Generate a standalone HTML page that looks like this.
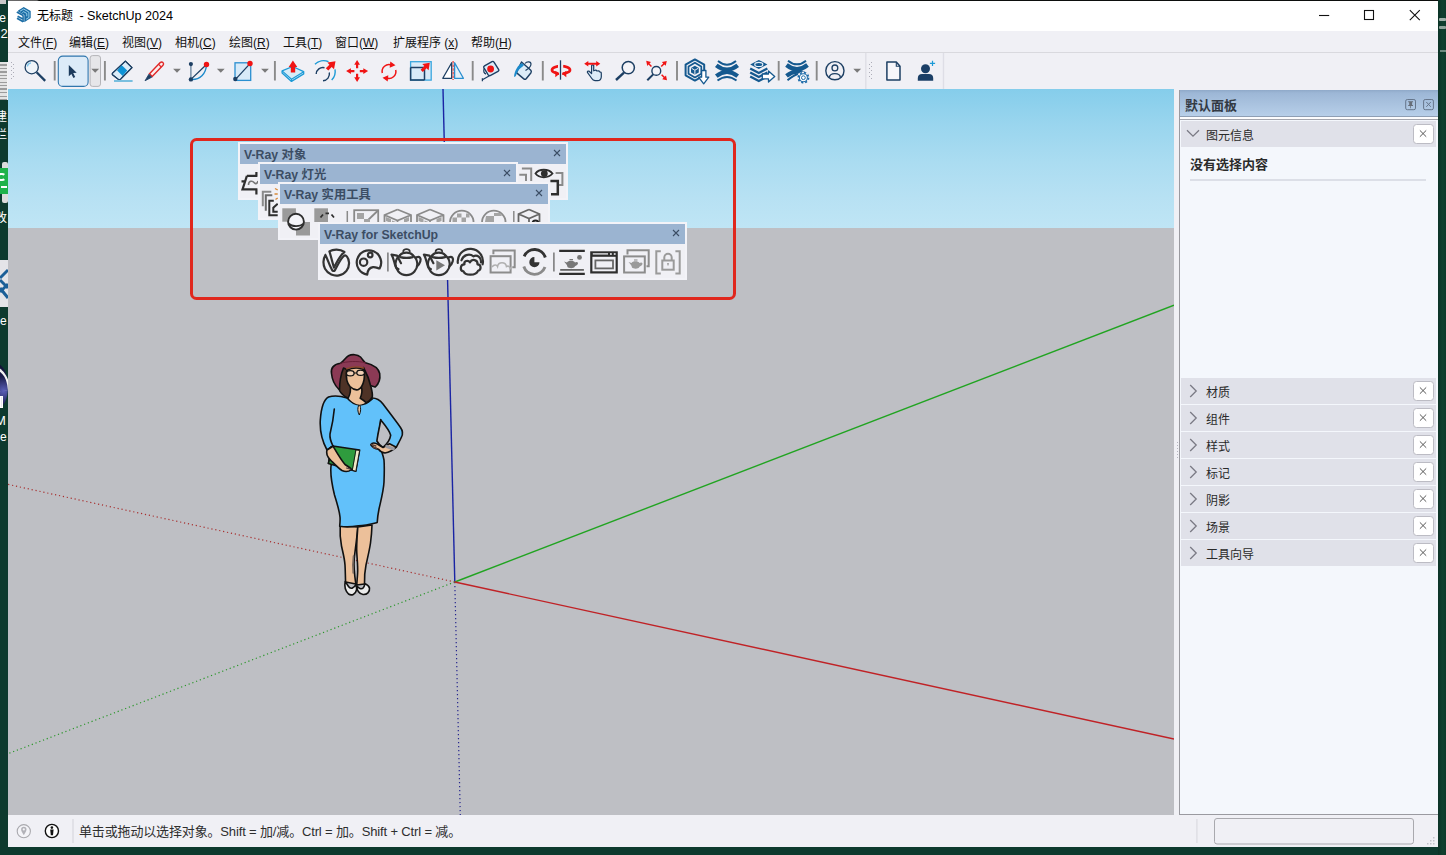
<!DOCTYPE html>
<html lang="zh-CN">
<head>
<meta charset="utf-8">
<title>无标题 - SketchUp 2024</title>
<style>
*{box-sizing:border-box;margin:0;padding:0}
html,body{width:1446px;height:855px;overflow:hidden;background:#0d3a2e}
body{position:relative;font-family:"Liberation Sans","Noto Sans CJK SC",sans-serif;font-size:12px;color:#1a1a1a}
.abs{position:absolute}
#desk{left:0;top:0;width:1446px;height:855px;background:#0d3a2e}
#win{left:8px;top:1px;width:1430px;height:846px;background:#f0f0f5}
#title{left:0;top:0;width:1430px;height:30px;background:#fff}
#title .txt{left:29px;top:0;height:30px;line-height:30px;font-size:12.6px;color:#000;white-space:nowrap}
#menu{left:0;top:30px;width:1430px;height:21px;background:#f0f0f5}
#menu span.mi{position:absolute;top:1px;height:21px;line-height:22px;font-size:12px;white-space:nowrap;color:#111}
#menu u{text-decoration:underline;text-underline-offset:1px}
#mline{left:0;top:51px;width:1430px;height:1px;background:#d9d9de}
#tb{left:0;top:52px;width:1430px;height:36px;background:#f0f0f5}
#view{left:0;top:88px;width:1166px;height:726px;background:#bebfc4;overflow:hidden}
#sky{left:0;top:0;width:1166px;height:139px;background:linear-gradient(#85cdeb 0,#99d5ee 25%,#aadcf1 52%,#b7e1f3 78%,#bfe5f5 100%)}
#status{left:0;top:814px;width:1430px;height:32px;background:#f0f0f5}
#status .txt{left:71px;top:0;height:33px;line-height:34px;font-size:13px;letter-spacing:-0.150px;color:#2e2e2e;white-space:nowrap}
/* right panel */
#panel{left:1171px;top:89px;width:259px;height:725px;background:#f4f7fc;border-left:1px solid #9a9aa0;border-bottom:1px solid #9a9aa0}
#phead{left:0;top:0;width:258px;height:27px;background:linear-gradient(#8fa9c9 0,#9db7d6 12%,#b7cfe9 100%);border-bottom:1px solid #8f9fb4}
#phead .txt{left:5px;top:4px;height:22px;line-height:23px;font-size:13px;font-weight:bold;color:#333a44;white-space:nowrap}
.prow{position:absolute;left:1px;width:255px;height:26px;background:#e0e1e9}
.prow .txt{position:absolute;left:25px;top:1px;height:26px;line-height:28px;font-size:12px;color:#2a2a2a;white-space:nowrap}
.prow .x{position:absolute;left:232px;top:2.500px;width:21px;height:20.500px;background:#fff;border:1px solid #bcbcc4;border-radius:3.500px}
/* floating toolbars */
.ft{position:absolute;background:#f0f0f5;border:2px solid #f3f3f8;height:57.500px;overflow:hidden}
.ft .hd{position:absolute;left:0;top:0;right:0;height:20px;background:#9bb4d1}
.ft .hd .txt{position:absolute;left:4px;top:0;height:20px;line-height:22px;font-size:12.3px;font-weight:bold;color:#3b4d64;white-space:nowrap}
.ft .hd .cx{position:absolute;right:5px;top:5px}
</style>
</head>
<body>
<div id="desk" class="abs">
  <div class="abs" style="left:0;top:0;width:8px;height:855px;overflow:hidden;color:#fff;font-size:12px;line-height:14px;white-space:nowrap">
    <div class="abs" style="left:0;top:0;width:6px;height:4px;background:#c9c9c9"></div>
    <span class="abs" style="left:-4px;top:11px">te</span>
    <span class="abs" style="left:0.500px;top:27px;font-size:13px">2</span>
    <div class="abs" style="left:0;top:62px;width:7.500px;height:38px;background:repeating-linear-gradient(#e4e4e4 0,#e4e4e4 2px,#9c9c9c 2px,#9c9c9c 3.500px);border-right:1px solid #f4f4f4"></div>
    <span class="abs" style="left:-5px;top:110px">建</span>
    <span class="abs" style="left:-5px;top:128px">栏</span>
    <div class="abs" style="left:2px;top:162px;width:5.500px;height:41px;background:#dcdcdc;border-radius:2px"></div>
    <div class="abs" style="left:0;top:168px;width:7.500px;height:25.500px;background:#1fb24a"></div>
    <div class="abs" style="left:-3px;top:173px;width:9px;height:8px;border:2px solid #fff;border-radius:4px;border-right-color:transparent"></div>
    <div class="abs" style="left:1px;top:186px;width:6px;height:2px;background:#fff"></div>
    <span class="abs" style="left:-5px;top:211px">改</span>
    <div class="abs" style="left:0;top:259.500px;width:7.500px;height:47.500px;background:#e4e4e8"></div>
    <svg class="abs" style="left:0;top:266px" width="8" height="36" viewBox="0 0 8 36"><path d="M0 12L8 4M0 14L8 22M0 26L8 18M0 22L8 32" stroke="#1b5f98" stroke-width="3" fill="none"/></svg>
    <span class="abs" style="left:0;top:314px">e</span>
    <div class="abs" style="left:-14px;top:364px;width:22px;height:45px;border-radius:11px/22px;background:radial-gradient(circle at 80% 60%,#5a5fb8 0,#1a1c4a 45%,#0c0e28 100%)"></div>
    <div class="abs" style="left:-16px;top:362px;width:24px;height:30px;border-top:3px solid #f2f2f2;border-right:2px solid #f2f2f2;border-radius:0 24px 0 0;transform:rotate(-8deg)"></div>
    <div class="abs" style="left:0;top:396px;width:3px;height:12px;background:#e8e8f0;border:1px solid #fff"></div>
    <span class="abs" style="left:-5px;top:414px;font-size:13px">M</span>
    <span class="abs" style="left:0;top:430px">e</span>
  </div>
  <div class="abs" style="left:1438px;top:0;width:8px;height:855px;overflow:hidden;background:linear-gradient(90deg,#0b3327,#11402f 60%,#0e392b)">
    <div class="abs" style="left:1px;top:18px;width:7px;height:3px;background:#9fb0a8;border-radius:1px"></div>
    <div class="abs" style="left:1px;top:26px;width:7px;height:3px;background:#8fa39a;border-radius:1px"></div>
    <div class="abs" style="left:2px;top:50px;width:6px;height:2px;background:#6f8a80"></div>
  </div>
  <div class="abs" style="left:8px;top:0;width:1430px;height:1px;background:linear-gradient(90deg,#6a6a6a 0,#5e5e5e 29px,#0c0e0d 31px,#0c0e0d 100%)"></div>
</div>
<div id="win" class="abs">
  <div id="title" class="abs"><span class="txt abs" style="left:29px;font-size:12px">无标题</span><span class="txt abs" style="left:71.500px;font-size:12.600px">-</span><span class="txt abs" style="left:79px;font-size:12.600px">SketchUp 2024</span>
    <svg class="abs" style="left:7px;top:4px" width="18" height="20" viewBox="15 5 18 20">
      <path d="M18.100 10.400L23.700 7.100L30.700 11V18.100L24.300 22.200V14.900L18.100 11.600z" fill="#1c6ea6"/>
      <path d="M20 11.200L23.700 9.100L28.900 12.100V17.500L26.100 19.200M22.400 12.500L23.700 11.700L26.800 13.500V16.300" fill="none" stroke="#a9dcf4" stroke-width="0.900"/>
      <path d="M16.800 11.900L23.200 15.500M17.600 16.200L22.900 19.100M17 18.200L23.200 21.700" fill="none" stroke="#1c6ea6" stroke-width="1.700"/>
      <path d="M23.100 15.300V22" stroke="#1c6ea6" stroke-width="1.500"/>
    </svg>
    <svg class="abs" style="left:1300px;top:0" width="130" height="30" viewBox="1308 1 130 30">
      <path d="M1319 15.500H1329.200" stroke="#111" stroke-width="1.100"/>
      <rect x="1364.500" y="10.500" width="9" height="9" fill="none" stroke="#111" stroke-width="1.100"/>
      <path d="M1409.800 10.200L1419.800 20.200M1419.800 10.200L1409.800 20.200" stroke="#111" stroke-width="1.100"/>
    </svg>
  </div>
  <div id="menu" class="abs">
    <span class="mi" style="left:10px">文件(<u>F</u>)</span>
    <span class="mi" style="left:61px">编辑(<u>E</u>)</span>
    <span class="mi" style="left:114px">视图(<u>V</u>)</span>
    <span class="mi" style="left:167px">相机(<u>C</u>)</span>
    <span class="mi" style="left:221px">绘图(<u>R</u>)</span>
    <span class="mi" style="left:275px">工具(<u>T</u>)</span>
    <span class="mi" style="left:327px">窗口(<u>W</u>)</span>
    <span class="mi" style="left:385px">扩展程序 (<u>x</u>)</span>
    <span class="mi" style="left:463px">帮助(<u>H</u>)</span>
  </div>
  <div id="mline" class="abs"></div>
  <div id="tb" class="abs"><svg class="abs" style="left:0;top:0" width="1430" height="36" viewBox="0 0 1430 36">
  <defs>
    <pattern id="grip" x="3" y="9" width="4" height="4" patternUnits="userSpaceOnUse"><rect x="0" y="0" width="1" height="1" fill="#adadb8"/><rect x="2" y="2" width="1" height="1" fill="#adadb8"/></pattern>
    <path id="dd" d="M-3.900 -1.900H3.900L0 2z" fill="#7a7a7a"/>
  </defs>
  <rect x="3" y="9" width="4" height="17" fill="url(#grip)"/>
  <rect x="861" y="9" width="4" height="17" fill="url(#grip)" transform="translate(0,0)"/>
  <path d="M857.800 0V36M935.500 0V36" stroke="#dedee6" stroke-width="1.400"/>
  <!-- separators -->
  <path d="M46.700 8V27.500M96.900 8V27.500M266.900 8V27.500M464.700 8V27.500M534.800 8V27.500M669 8V27.500M770.700 8V27.500M808.700 8V27.500" stroke="#8a8a8a" stroke-width="1.900"/>
  <!-- zoom search -->
  <circle cx="23.700" cy="14.200" r="6.600" fill="#eef4fa" stroke="#1d3f63" stroke-width="1.300"/>
  <path d="M19.300 13.500A4.500 4.500 0 0 1 23 9.800" fill="none" stroke="#7cc4ea" stroke-width="1.300"/>
  <path d="M28.600 19.300L37.200 27.900" stroke="#1d3f63" stroke-width="2.300"/>
  <!-- select -->
  <rect x="50.300" y="3.100" width="29.800" height="30.300" rx="4.500" fill="#dcebf8" stroke="#2f76ad" stroke-width="1.100"/>
  <path d="M60.800 12.100V23.200L63.400 20.900L65.400 24.900L67.200 24L65.200 20.100L68.700 19.800z" fill="#1b3a5c"/>
  <rect x="82.100" y="2.600" width="10.400" height="30.800" rx="2.500" fill="#e6e6e9" stroke="#b4b4b8" stroke-width="1"/>
  <use href="#dd" x="87.200" y="17.700"/>
  <!-- eraser -->
  <path d="M117.400 8.100L124 14.600L112.600 26.100Q111.300 27.300 110 26.100L104.800 22Q103.700 21 104.800 19.900z" fill="#dcecf8" stroke="#1d3f63" stroke-width="1.200" stroke-linejoin="round"/>
  <path d="M113.500 12.100L119.300 17.600L114.600 23.100L109.100 17.600z" fill="#0f93d6"/>
  <path d="M117.400 8.100L124 14.600L112.600 26.100Q111.300 27.300 110 26.100L104.800 22Q103.700 21 104.800 19.900z" fill="none" stroke="#1d3f63" stroke-width="1.200" stroke-linejoin="round"/>
  <path d="M106 28H124.600" stroke="#79bfdf" stroke-width="2"/>
  <!-- pencil -->
  <path d="M141.500 20.700L152.200 9.600Q153.700 8.300 155 9.600Q156.200 11 155 12.300L144.200 23.600z" fill="#fbeeee" stroke="#e02626" stroke-width="1.400"/>
  <path d="M137 27.800L140.900 21.200L143.800 24.200z" fill="#1d3f63" stroke="#1d3f63" stroke-width="0.800" stroke-linejoin="round"/>
  <path d="M150.500 11.200L153.200 14" stroke="#e02626" stroke-width="1.100"/>
  <use href="#dd" x="169" y="17.700"/>
  <!-- arc -->
  <path d="M182.900 11.500V26.400" stroke="#5b7896" stroke-width="1.200"/>
  <path d="M182.900 26.400L198.500 11.500" stroke="#1d3f63" stroke-width="1.300"/>
  <path d="M182.900 26.400C192 27 198 21 198.500 11.500" fill="none" stroke="#1c8acb" stroke-width="1.400"/>
  <circle cx="182.900" cy="11.100" r="2.100" fill="#1d3f63"/><circle cx="182.900" cy="26.400" r="2.200" fill="#1d3f63"/>
  <circle cx="198.500" cy="11.500" r="2.700" fill="#f01414"/>
  <use href="#dd" x="212.800" y="17.700"/>
  <!-- rectangle -->
  <rect x="227" y="9.800" width="15.700" height="17.600" fill="#d8eaf8" stroke="#2a8fd0" stroke-width="1.300"/>
  <path d="M227.300 26.600L242 10.600" stroke="#1d3f63" stroke-width="1.300"/>
  <circle cx="227.300" cy="26" r="2.200" fill="#1d3f63"/><circle cx="242" cy="10.500" r="2.700" fill="#f01414"/>
  <use href="#dd" x="257" y="17.700"/>
  <!-- push pull -->
  <path d="M274.100 17.900L284.600 13.500L295.700 18.700V20.900L283.500 28.400L274.100 19.900z" fill="#d6ecf8" stroke="#1c9ad6" stroke-width="1.300" stroke-linejoin="round"/>
  <path d="M274.100 17.900L283.500 26.200L295.700 18.700M283.500 26.200V28.400" fill="none" stroke="#1c9ad6" stroke-width="1.200"/>
  <path d="M284.900 7.500L289.300 14H287.200V19.500H282.800V14H280.700z" fill="#f01414"/>
  <!-- follow me -->
  <path d="M307 11.200A12 12 0 0 1 320.500 8.700M327 16.300A12.200 12.200 0 0 1 323.700 27" fill="none" stroke="#1c9ad6" stroke-width="1.400"/>
  <path d="M308.200 21A6.700 6.700 0 0 1 316.500 14.700M321.300 19.500A6.800 6.800 0 0 1 315 27.700" fill="none" stroke="#1d3f63" stroke-width="1.400"/>
  <path d="M327.500 8.300L326 16.200L323.700 14L320.300 17.600L317.800 15.200L321.400 11.700L319.400 9.600z" fill="#f01414"/>
  <!-- move -->
  <g fill="#f01414">
    <path d="M349.100 7L352 11.800H350.200V15.300H348V11.800H346.200z"/>
    <path d="M349.100 29L352 24.200H350.200V20.700H348V24.200H346.200z"/>
    <path d="M338.100 18.100L342.900 15.200V17H346.400V19.200H342.900V21z"/>
    <path d="M360.100 18.100L355.300 15.200V17H351.800V19.200H355.300V21z"/>
  </g>
  <!-- rotate -->
  <path d="M374.300 20A6.900 6.900 0 0 1 383.500 12M387.700 17A6.900 6.900 0 0 1 378.500 25" fill="none" stroke="#f01414" stroke-width="1.500"/>
  <path d="M382.300 8.600L387.500 12.300L381.700 14.800zM379.700 28.400L374.500 24.700L380.300 22.200z" fill="#f01414"/>
  <!-- scale -->
  <rect x="402.600" y="8.700" width="20.600" height="18.400" fill="#d8eaf8" stroke="#3aa6de" stroke-width="1.300"/>
  <path d="M402.600 14.500H416.500V27.100" fill="none" stroke="#1d3f63" stroke-width="1.500"/>
  <path d="M402.600 14.500V27.100H416.500" fill="none" stroke="#1d3f63" stroke-width="1.500"/>
  <path d="M421.800 9.700L420.600 17.200L418.500 15.200L414.800 19L412.600 16.800L416.300 13L414.300 11z" fill="#f01414"/>
  <!-- flip -->
  <path d="M443.700 9.800V25.300H434.800z" fill="#fff" stroke="#1d3f63" stroke-width="1.300" stroke-linejoin="round"/>
  <path d="M446.600 9.800V25.300H455.400z" fill="#e4f1fa" stroke="#2a8fd0" stroke-width="1.300" stroke-linejoin="round"/>
  <path d="M445.100 8V27" stroke="#e36a6a" stroke-width="1.700" stroke-dasharray="2.600 1"/>
  <!-- tape -->
  <path d="M484 8.600Q485.300 8 486 9.200L490.700 16.500Q491.300 17.700 490 18.400L482.200 22.500Q480.900 23 480.200 21.900L475.800 14.600Q475.300 13.500 476.500 12.800z" fill="#dcecf8" stroke="#1d3f63" stroke-width="1.400"/>
  <circle cx="482.600" cy="16" r="3.400" fill="#f01414"/>
  <path d="M481.500 22.700L474.400 26.700M474.400 25.300V28.300M476.300 15.500C475 18 476 20.500 478 21" fill="none" stroke="#1d3f63" stroke-width="1.300"/>
  <!-- paint bucket -->
  <path d="M513.500 9L522.800 17.300Q523.800 18.400 523 19.700L518.200 25.700Q517 26.900 515.800 25.900L508.400 19.600z" fill="#dcecf8" stroke="#1d3f63" stroke-width="1.400" stroke-linejoin="round"/>
  <path d="M517 10.500C519 8 523 8.500 523 11C523 13.500 520 16 517.500 17.500" fill="none" stroke="#1d3f63" stroke-width="1.200"/>
  <path d="M513.800 10.200C510 12 506.800 17 506 23.700C508 24.500 508.300 21 510 18C511.500 15.500 514.500 14 516 12z" fill="#1c8acb"/>
  <!-- orbit -->
  <ellipse cx="553" cy="16.900" rx="9" ry="3.700" fill="none" stroke="#f01414" stroke-width="2.700"/>
  <rect x="550" y="10" width="5.200" height="9.500" fill="#f0f0f5"/>
  <rect x="551" y="19" width="3.200" height="4" fill="#f0f0f5"/>
  <path d="M547.300 17.800L551.300 21L547.300 24.200zM558.300 17.800L554.300 21L558.300 24.200z" fill="#f01414"/>
  <path d="M552.500 7.300V26.700" stroke="#1d3f63" stroke-width="1.300"/>
  <!-- pan -->
  <path d="M583.600 20.500V12.500Q584.600 11.200 585.700 12.500V17.800L587.300 17.200Q588.500 17 588.800 18L590.300 17.800Q591.300 17.700 591.600 18.800Q593.400 18.800 593.300 20.500V24Q593 27.600 589.500 27.700H587Q585 27.500 583.800 25.500L579.400 19.300Q579.200 17.800 580.800 18z" fill="#dcecf8" stroke="#1d3f63" stroke-width="1.200" stroke-linejoin="round"/>
  <path d="M576.200 10.700L580.300 8V9.700H588.200V8L592.300 10.700L588.200 13.400V11.700H580.300V13.400z" fill="#f01414"/>
  <!-- zoom -->
  <circle cx="620.300" cy="14.600" r="6.100" fill="#f4f4f8" stroke="#1d3f63" stroke-width="1.500"/>
  <path d="M616 19.600L608 27" stroke="#1d3f63" stroke-width="2.400"/>
  <!-- zoom extents -->
  <circle cx="648.300" cy="17.900" r="4.400" fill="#f4f4f8" stroke="#1d3f63" stroke-width="1.400"/>
  <path d="M645.200 21.400L639.300 27.300" stroke="#1d3f63" stroke-width="2"/>
  <g fill="#f01414">
    <path d="M638.200 7.800L643 9L641.500 10.500L644 13L642.900 14L640.500 11.600L639.200 12.900z"/>
    <path d="M658.800 8L657.700 12.800L656.300 11.400L653.800 14L652.700 12.900L655.200 10.400L653.900 9z"/>
    <path d="M659 27.300L654.200 26.200L655.600 24.800L653.100 22.300L654.200 21.200L656.700 23.700L658 22.400z"/>
  </g>
    <!-- 3d warehouse -->
  <g fill="none" stroke="#15598f" stroke-linejoin="round">
    <path d="M686.900 6.400L696.200 11.700V22.300L686.900 27.600L677.600 22.300V11.700z" stroke-width="2"/>
    <path d="M686.900 9.700L693.300 13.400V20.700L686.900 24.400L680.500 20.700V13.400z" stroke-width="1.700"/>
  </g>
  <path d="M686.900 12.800L690.800 15V19.400L686.900 21.600L683 19.400V15z" fill="#15598f"/>
  <path d="M686.900 17.200V21M686.900 17.200L683.600 15.300M686.900 17.200L690.200 15.300" stroke="#f0f0f5" stroke-width="1"/>
  <path d="M693.600 17.500H697.900V24.200H700.800L695.700 30.800L690.600 24.200H693.600z" fill="#fff" stroke="#15598f" stroke-width="1.300" stroke-linejoin="round"/>
  <!-- extension warehouse -->
  <g fill="none" stroke="#15598f">
    <path d="M710 8Q719 15.300 728 8" stroke-width="1.900"/>
    <path d="M708.300 12.300Q719 20.800 729.700 12.300" stroke-width="4.200"/>
    <path d="M708.300 23.200Q719 14.700 729.700 23.200" stroke-width="4.200"/>
    <path d="M709.500 27.600Q719 20.200 728.500 27.600" stroke-width="1.900"/>
  </g>
  <!-- layers -->
  <path d="M750.800 6.900L759.400 11.400L750.800 15.900L742.200 11.400z" fill="#15598f"/>
  <ellipse cx="750.800" cy="11.400" rx="4" ry="2.100" fill="none" stroke="#e8f0f8" stroke-width="1.200"/>
  <g fill="none" stroke="#15598f" stroke-width="2.300">
    <path d="M742.200 15.500L750.800 20L759.400 15.500"/>
    <path d="M742.200 19.500L750.800 24L759.400 19.500"/>
    <path d="M742.200 23.500L750.800 28L759.400 23.500"/>
  </g>
  <path d="M754.300 21H760.500V17.900L766.700 23.500L760.500 29V25.900H754.300z" fill="#fff" stroke="#15598f" stroke-width="1.300" stroke-linejoin="round"/>
  <!-- extension manager -->
  <g fill="none" stroke="#15598f">
    <path d="M780 7.700Q789 15 798 7.700" stroke-width="1.900"/>
    <path d="M778.500 12Q789 20.500 799.500 12" stroke-width="4.200"/>
    <path d="M778.500 22.900Q789 14.400 799.500 22.900" stroke-width="4.200"/>
    <path d="M779.500 27.300Q786 22 790 21" stroke-width="1.900"/>
  </g>
  <circle cx="795.400" cy="24.700" r="6.300" fill="#f0f0f5"/>
  <circle cx="795.400" cy="24.700" r="5.100" fill="none" stroke="#1b6aa8" stroke-width="1.700" stroke-dasharray="2 2"/>
  <circle cx="795.400" cy="24.700" r="4" fill="#fff" stroke="#1b6aa8" stroke-width="1.100"/>
  <circle cx="795.400" cy="24.700" r="1.900" fill="#fff" stroke="#1b6aa8" stroke-width="1"/>
  <!-- user -->
  <circle cx="826.900" cy="17.700" r="9.100" fill="none" stroke="#1d3f63" stroke-width="1.400"/>
  <circle cx="826.900" cy="14.900" r="2.900" fill="none" stroke="#1d3f63" stroke-width="1.300"/>
  <path d="M821.300 24.600C821.800 19.200 832 19.200 832.500 24.600" fill="none" stroke="#1d3f63" stroke-width="1.300"/>
  <use href="#dd" x="849.200" y="17.700"/>
  <!-- doc -->
  <path d="M878.900 9H888.300L892 13.200V27H878.900z" fill="#f6f6fa" stroke="#1d3f63" stroke-width="1.500" stroke-linejoin="round"/>
  <path d="M888.300 9V13.200H892" fill="none" stroke="#1d3f63" stroke-width="1.100"/>
  <!-- person plus -->
  <circle cx="917.500" cy="15.700" r="4.500" fill="#1b3f66"/>
  <path d="M909.800 27.700V25Q910 21 914 21H921Q925 21 925.200 25V27.700z" fill="#1b3f66"/>
  <path d="M924.500 7.800V13M921.900 10.400H927.100" stroke="#1c9ad6" stroke-width="1.200"/>

</svg>
</div>
  <div id="view" class="abs">
    <div id="sky" class="abs"></div>
        <svg class="abs" style="left:0;top:0" width="1166" height="726" viewBox="0 0 1166 726">
      <g fill="none" stroke-linecap="butt">
        <line x1="435" y1="0" x2="446.800" y2="493" stroke="#1a24a4" stroke-width="1.400"/>
        <line x1="446.800" y1="493" x2="452.300" y2="726" stroke="#26268e" stroke-width="1.200" stroke-dasharray="1.200 2.800"/>
        <line x1="446.800" y1="493" x2="1166" y2="216.200" stroke="#21a421" stroke-width="1.400"/>
        <line x1="446.800" y1="493" x2="0" y2="664.700" stroke="#2b962b" stroke-width="1.200" stroke-dasharray="1.200 2.800"/>
        <line x1="446.800" y1="493" x2="1166" y2="650" stroke="#c02226" stroke-width="1.400"/>
        <line x1="446.800" y1="493" x2="0" y2="395.400" stroke="#a83030" stroke-width="1.200" stroke-dasharray="1.200 2.800"/>
      </g>
            <g transform="translate(-8,-89)" stroke="#111" stroke-width="1.600" stroke-linejoin="round" stroke-linecap="round">
        <!-- legs -->
        <path d="M340.200 526C339.800 533 340.300 540 341.500 546C343 553 344.500 558 345 565C345.400 571 345.300 577 345.600 582L355.800 584C354.800 577 353.600 566 354.200 559C354.800 552 356.800 540 357.800 527z" fill="#ecc09a"/>
        <path d="M357.800 527C357 538 356.300 547 356.800 553C357.200 560 358 567 357.600 573C357.400 578 356.800 582 356.800 585L364.500 584C364.300 578 364.800 571 366 565C367.500 558 369.500 550 370.500 543C371.300 537 371.800 531 372 525z" fill="#ecc09a"/>
        <path d="M353.500 556C352.800 561 352.600 567 353.200 573" fill="none" stroke="#7a6a60" stroke-width="1.600"/>
        <!-- shoes -->
        <path d="M345.200 581.500C344.300 586 345.500 591 348.500 594C351.500 596 355.500 594.500 356.500 590C356.800 588 356.300 586 355.800 584.500C354 588.500 350.500 589.500 348.500 586.500C347.500 585 346.300 583 345.200 581.500z" fill="#ececec"/>
        <path d="M357 586C356.500 590 359 594 363 594.500C367 594.800 370 592 369.500 588C369 586 367 584.500 364.500 583.500C365 587 362.500 589.500 360 588.500C358.800 588 357.800 587 357 586z" fill="#ececec"/>
        <!-- right arm (viewer right) -->
        <path d="M372 398C376 398 380 400 383 404C389 412 396 421 400.500 427.500C403 431 403 434 401.500 437C400 440.500 398 444 396.500 447L388 449C389.500 445 390.500 440 390.700 435.200C388 429 384 424 380.800 420z" fill="#62c1fa" stroke="none"/>
        <path d="M372 398C376 398 380 400 383 404C389 412 396 421 400.500 427.500C403 431 403 434 401.500 437C400 440.500 398 444 396.500 447" fill="none"/>
        <!-- dress body -->
        <path d="M347.200 398C341 396 333 395.500 328.500 397C323 400 321 410 320.300 420C319.700 430 321.500 440 327 450L333 446C335 452 333 459 331 466C330 476 332.500 487 334.500 495C337 503 339.500 511 340 517C340.300 520 340 523 339.700 526.200C346 527.500 352 527 358.500 525.800C365 525.500 371 524 377.200 522.500C377.500 518 378 514 379 509C381 500 383.500 491 384 482C384.300 474 384.500 466 384 460C383 454 380 447 377.500 441C378 434 380.500 426 380.700 419.500C381 412 379 404 372.300 399C368 403 364 405 359.500 405C354.500 404.500 350.500 402 347.200 398z" fill="#62c1fa" stroke="none"/>
        <path d="M372.300 399C368 403 364 405 359.500 405C354.500 404.500 350.500 402 347.200 398C341 396 333 395.500 328.500 397C323 400 321 410 320.300 420C319.700 430 321.500 440 327 450L333 446C335 452 333 459 331 466C330 476 332.500 487 334.500 495C337 503 339.500 511 340 517C340.300 520 340 523 339.700 526.200C346 527.500 352 527 358.500 525.800C365 525.500 371 524 377.200 522.500C377.500 518 378 514 379 509C381 500 383.500 491 384 482C384.300 474 384.500 466 384 460C383 454 380 447 377.500 441C378 434 380.500 426 380.700 419.500" fill="none"/>
        <path d="M334.300 409C333.500 418 332 426 330 434C329.500 438 331 442 333 446" fill="none"/>
        <path d="M358.600 405.500C357.500 408 357.300 411 359.300 415C361 411.500 361 408 360 405.500z" fill="#ecc09a" stroke-width="1"/>
        <path d="M380.800 420C384 424 389 429.500 390.700 435.200C390 440 386.500 444.500 383 447.400C380.500 446 378.500 444 376.900 441C377.800 434 379.500 427 380.800 420z" fill="#bebfc4"/>
        <!-- hand on hip -->
        <path d="M396.300 447.200C393.500 449.800 390 452.300 385 453C382 452.700 380 451.200 378.500 449.200C375.500 448.700 372.500 447.200 370.800 444.700C372 442.600 375 442.900 377 443.900C379 445.100 381 446.600 383 447.500L389.500 443.800z" fill="#ecc09a"/>
        <path d="M386.800 446.500L393.300 448.800" stroke="#9a9aa2" stroke-width="3.200"/>
        <path d="M371.300 444.300L375.800 446M372.800 447.200L376.500 448.200" stroke="#5a4038" stroke-width="1.400" fill="none"/>
        <!-- book -->
        <path d="M332.800 446L359.600 450L355.800 471.300L328.300 463.500z" fill="#2f9c3e"/>
        <path d="M356.300 450L359.600 450.500L355.800 471.300L352.700 470.300z" fill="#efe9c8" stroke-width="0.900"/>
        <path d="M332.800 446L328.300 463.500L330 447.500z" fill="#1f7a2c" stroke-width="0.900"/>
        <!-- hand holding book -->
        <path d="M327 450C326 453 327.500 457 330.500 460C334 463.500 338 468 342 470.500C345 472 349 471.500 351.500 469.500C350 467.500 347.500 466 345 464.500C341 460 337 453 333 446.200z" fill="#ecc09a"/>
        <path d="M346.500 468L350.500 469.200" stroke="#4a3a3a" stroke-width="1.100"/>
        <!-- neck -->
        <path d="M351 384L349.500 399C352 402.500 356 404.500 359.500 404.800C363 404.500 366 402 368.500 399L363 386z" fill="#ecc09a" stroke="none"/>
        <!-- hat -->
        <path d="M331.500 373.500C330.500 368 334 364 340.500 363.300C343.500 361.500 345.500 357.500 348.500 355.800C352 354 357.500 354.300 360.500 357C362.500 359 363.500 361.500 365.500 362.800C372 364.500 378.500 367.500 379.700 373.500C380.500 379 378.500 384 375.300 387C372 386 366 384 361 384L345 386C343 387.500 341 389 338.800 389.300C334.500 385 332 379 331.500 373.500z" fill="#8b3a55"/>
        <path d="M340.500 363.300C346 361.500 358 360.500 365.500 362.800" fill="none" stroke="#6a2038" stroke-width="1"/>
        <!-- hair -->
        <path d="M343.500 368C341 374 339.500 383 339.500 390.500C341 393.500 344.500 396.500 348 398.300C350.500 394 351 389 350 384C347 380 346 374 347 369.500z" fill="#4e3226"/>
        <path d="M363.500 367.500C366.500 373 369.500 380 371 387C372 391 372.800 394.500 372.300 397C370 400.500 368 402.300 366.200 402.800C364 400.500 361.500 399 360.200 398.200C362 394 362.500 389.500 361 386C364 381 364.500 374 363.500 367.500z" fill="#4e3226"/>
        <!-- face -->
        <path d="M346.700 370.500C345.800 377 346.800 383 350 386.500C352.500 389 355.500 390.200 358 389.700C361 388.500 363 385 364 380C364.500 376 364.500 372 363.800 369.500C358 367.300 351.500 367.800 346.700 370.500z" fill="#ecc09a"/>
        <path d="M346.500 368.800C351 366.800 358 366.500 363.500 368" fill="none" stroke="#8a4a28" stroke-width="1.400"/>
        <ellipse cx="350.300" cy="373.200" rx="3.800" ry="2.600" fill="#f1d0b5" stroke-width="1.200"/>
        <ellipse cx="360.600" cy="372.800" rx="3.800" ry="2.600" fill="#f1d0b5" stroke-width="1.200"/>
        <path d="M354.100 373H356.800" fill="none" stroke-width="1"/>
      </g>

    </svg>
    <div class="abs" style="left:182.200px;top:49px;width:545.400px;height:162.200px;border:3.800px solid #e0271d;border-radius:6.500px"></div>

        <!-- V-Ray 对象 -->
    <div class="ft" style="left:230px;top:53px;width:330px">
      <div class="hd"><span class="txt">V-Ray 对象</span><svg class="cx" width="8" height="8" viewBox="0 0 8 8"><path d="M1 1L7 7M7 1L1 7" stroke="#3b4d64" stroke-width="1.1" fill="none"/></svg></div>
      <svg class="abs" style="left:0;top:20px" width="327" height="33" viewBox="0 0 327 33">
        <!-- infinite plane icon (partially hidden) -->
        <g fill="none" stroke="#2e2e2e" stroke-width="2.200">
          <path d="M6.900 11.900H17.400M6.900 11.900L2.500 25.300H17.400M1.500 17.400H5M16.400 8V11.900M16.400 25.300V30.500"/>
        </g>
        <path d="M8.500 21c0-4.500 4-4.500 5.500-2.500s3.500 1 4-1.500" fill="none" stroke="#777" stroke-width="1.600"/>
        <!-- right icons -->
        <g fill="none" stroke="#8a8a8a" stroke-width="2">
          <path d="M281.900 4.500H291.200V17M279.300 10.700H286V17"/>
          <path d="M315.600 9H322.400V21H319"/>
        </g>
        <path d="M295.5 9.5c3.500-5 13-5 17 0c-4 5-13.500 5-17 0z" fill="#f0f0f5" stroke="#2e2e2e" stroke-width="1.8"/>
        <circle cx="304.300" cy="9.600" r="3.400" fill="#2e2e2e"/>
        <path d="M310.400 17H317.800V30.300H311" fill="none" stroke="#2e2e2e" stroke-width="2.500"/>
      </svg>
    </div>
    <!-- V-Ray 灯光 -->
    <div class="ft" style="left:250px;top:73px;width:260.200px">
      <div class="hd"><span class="txt">V-Ray 灯光</span><svg class="cx" width="8" height="8" viewBox="0 0 8 8"><path d="M1 1L7 7M7 1L1 7" stroke="#3b4d64" stroke-width="1.1" fill="none"/></svg></div>
      <svg class="abs" style="left:0;top:20px" width="257" height="33" viewBox="0 0 257 33">
        <g fill="none" stroke-width="2">
          <path d="M11.300 7.800H2.800V22.200" stroke="#8a8a8a"/>
          <path d="M12.300 11.300H5.800V26.700" stroke="#6a6a6a"/>
          <path d="M13.800 16.800H9.300V31.200H17.700" stroke="#2e2e2e"/>
          <path d="M17.700 19.700L13.300 23.700V27.700H17.700" stroke="#2e2e2e"/>
        </g>
        <g stroke="#d98a3a" stroke-width="1.400" fill="none"><path d="M15 4.500L17.700 6M14.500 10H17.700M15.500 15.500L17.700 14"/></g>
      </svg>
    </div>
    <!-- V-Ray 实用工具 -->
    <div class="ft" style="left:270px;top:93px;width:271.700px">
      <div class="hd"><span class="txt">V-Ray 实用工具</span><svg class="cx" width="8" height="8" viewBox="0 0 8 8"><path d="M1 1L7 7M7 1L1 7" stroke="#3b4d64" stroke-width="1.1" fill="none"/></svg></div>
      <svg class="abs" style="left:0;top:20px" width="269" height="33" viewBox="0 0 269 33">
        <rect x="2.300" y="4.300" width="13.600" height="13.400" fill="#9a9a9a"/>
        <rect x="16" y="18" width="14" height="13.500" fill="#9a9a9a"/>
        <circle cx="16" cy="17.700" r="7.900" fill="#f4f4f8" stroke="#2e2e2e" stroke-width="1.900"/>
        <path d="M8.300 19.500c4 3.600 11.500 3.600 15.400 0" fill="none" stroke="#2e2e2e" stroke-width="1.700"/>
        <rect x="34.300" y="4.300" width="13.700" height="13.700" fill="#9a9a9a"/>
        <path d="M40.500 13.500L43 10.500M45.500 9.300H49M51.500 10.500L54 13.500" stroke="#2e2e2e" stroke-width="1.800" fill="none"/>
        <path d="M67.300 7V20" stroke="#8a8a8a" stroke-width="1.500"/>
        <g fill="none" stroke="#8a8a8a" stroke-width="1.800">
          <rect x="74.200" y="6.200" width="24" height="20"/>
          <path d="M98 6.500L86 18"/>
          <path d="M117.500 5.500L104.500 11V25M117.500 5.500L131 11V25M104.500 11L117.500 16.500L131 11M117.500 16.500V26"/>
          <path d="M150 5.500L137 11V25M150 5.500L163.500 11V25M137 11L150 16.500L163.500 11M150 16.500V26"/>
          <circle cx="181.800" cy="18.500" r="11.800"/>
          <circle cx="213.800" cy="18.500" r="11.800"/>
        </g>
        <g fill="#a4a4a4">
          <rect x="77" y="9" width="7" height="6"/><rect x="84" y="15" width="6" height="5"/>
          <path d="M106 13l5 2v4l-5-2zM112 16.500l4 1.500v4l-4-1.500zM124 15l5-2v4l-5 2z"/>
          <path d="M138.500 13l5 2v4l-5-2zM144.500 16.500l4 1.500v4l-4-1.500zM156.500 15l5-2v4l-5 2z"/>
          <rect x="177" y="9.500" width="4.500" height="4"/><rect x="181.500" y="13.500" width="4.500" height="4.500"/><rect x="172.500" y="13.500" width="4.500" height="4.500"/><rect x="186" y="9.500" width="3.500" height="4"/>
          <path d="M206 12h8v6h-9zM214 9h6l2 3h-8z"/>
        </g>
        <path d="M233.800 7V20" stroke="#8a8a8a" stroke-width="1.500"/>
        <path d="M249 5.500L238.500 10V24M249 5.500L259.500 10V24M238.500 10L249 14.500L259.500 10M249 14.500V26" fill="none" stroke="#666" stroke-width="1.800"/>
        <circle cx="255.500" cy="19.500" r="3" fill="none" stroke="#222" stroke-width="1.800"/>
      </svg>
    </div>
    <!-- V-Ray for SketchUp -->
    <div class="ft" style="left:310px;top:133px;width:368.500px">
      <div class="hd"><span class="txt">V-Ray for SketchUp</span><svg class="cx" width="8" height="8" viewBox="0 0 8 8"><path d="M1 1L7 7M7 1L1 7" stroke="#3b4d64" stroke-width="1.1" fill="none"/></svg></div>
      <svg class="abs" style="left:0;top:20px" width="365" height="33" viewBox="0 0 365 33">
        <g fill="none" stroke="#333" stroke-width="2.200" stroke-linecap="round" stroke-linejoin="round" transform="translate(0,0.800)">
          <!-- V-Ray logo -->
          <path d="M5.400 10.200C3 14 2.800 20 5 24C8 29.500 14 31.500 19 30.500C25 29.500 29.500 24 29 17.500C28.800 15 28 13 27 11.800C26 10.600 24.800 10.500 24 11C20.500 13.500 17.500 21 14.800 25.600C13.800 26.600 12.500 26.200 12 25C9.500 21 7.500 14 5.400 10.200"/>
          <path d="M9.400 6.600C13 4.200 20 4 24.400 7.200C20 10.500 17 17 14 22.800C12.500 18 11 11.500 9.400 6.600z"/>
          <!-- palette -->
          <path d="M47.200 29.800A12.200 12.200 0 1 1 59.600 23.700C57.500 23.300 55.500 22 53 22.300C49.500 22.800 47.500 26 47.200 29.800z"/>
          <circle cx="43.600" cy="17.400" r="3.700"/>
          <circle cx="50.200" cy="10.200" r="2.300"/>
          <!-- teapot 1 -->
          <path d="M79.9 10.600A10.900 10.900 0 1 0 92.9 10.600"/>
          <path d="M79.9 10.600C82.5 6.800 90.3 6.800 92.9 10.600M80.2 12.300C84.0 13.300 89.0 13.300 92.7 12.300"/>
          <path d="M83.2 6.400C84.0 3.600 89.0 3.600 89.8 6.400" stroke-width="1.800"/>
          <path d="M78.4 24.300C76.5 23.800 75.5 22 75.0 20C74.0 16.500 73.3 12.500 71.5 9.800L77.0 10.800L81.0 18.400"/>
          <path d="M96.3 12.600C100.0 11.200 101.3 13.500 100.3 16.500C99.5 19 98.3 20.500 97.2 21.500"/>
          <!-- teapot 2 -->
          <path d="M112.3 10.600A10.900 10.900 0 1 0 125.3 10.600"/>
          <path d="M112.3 10.600C114.9 6.800 122.7 6.800 125.3 10.600M112.6 12.300C116.4 13.300 121.4 13.300 125.1 12.300"/>
          <path d="M115.6 6.400C116.4 3.600 121.4 3.600 122.2 6.400" stroke-width="1.800"/>
          <path d="M110.8 24.300C108.9 23.800 107.9 22 107.4 20C106.4 16.500 105.7 12.500 103.9 9.800L109.4 10.800L113.4 18.400"/>
          <path d="M128.7 12.600C132.4 11.200 133.7 13.500 132.7 16.500C131.9 19 130.7 20.500 129.6 21.500"/>
          <!-- cloud -->
          <path d="M137.800 18A12.600 12.600 0 1 1 162.600 19.500"/>
          <path d="M141.500 15.500C143 10.500 149 8 153.500 11.500C157 9.500 161.500 12.500 161 17.500"/>
          <path d="M144.500 19.500C143.500 16.500 148 14.500 150 17.500C152 13.500 158 15 157.500 19.500C161.500 19.500 161.500 25 158 26C156 31 145 31 143.500 26.500C139.500 26 140 19.500 144.500 19.500z"/>
        </g>
        <path d="M116.300 16.200V26.400L125 21.300z" fill="#777"/>
        <path d="M67.900 8.400V27.600M233.900 8.400V27.600" stroke="#777" stroke-width="1.500"/>
        <!-- frame buffer -->
        <g fill="none" stroke="#8c8c8c" stroke-width="2">
          <path d="M173.400 10.300V6.600H194.700V23.300H192.300"/>
          <rect x="170.600" y="12.200" width="20" height="16.300"/>
        </g>
        <path d="M172 23c2-2.500 4.500-2.500 5.500-.5c1-5 8-5 9 0c2-1 4 .5 4 3" fill="none" stroke="#b0b0b0" stroke-width="1.600"/>
        <!-- clock -->
        <path d="M204.200 12.400A11.200 11.200 0 0 1 225.300 13.500" fill="none" stroke="#333" stroke-width="2.900"/>
        <path d="M203.800 22.500A11.200 11.200 0 0 0 225 23" fill="none" stroke="#8a8a8a" stroke-width="2.900"/>
        <path d="M214.400 18.200V13.100A5.100 5.100 0 1 0 219.500 18.200z" fill="#333"/>
        <!-- render region -->
        <path d="M239.200 6.800H264.800M239.200 29.800H264.800" stroke="#2e2e2e" stroke-width="2.200"/>
        <path d="M240.200 25.900H263.900" stroke="#666" stroke-width="1.800"/>
        <path d="M244 17.500l3 1c1-2.500 7-2.500 8 0c2-1.500 4 0 2.500 2c-1 1.300-2.500 1.500-3 2.500c-.5 1.500-6 1.500-7 0c-.5-2.500-2-3.500-3.500-5.500z" fill="#777"/>
        <rect x="249.500" y="15" width="3.500" height="1.200" fill="#777"/>
        <circle cx="259.500" cy="13.400" r="2.400" fill="#777"/>
        <!-- window -->
        <rect x="271.300" y="8.400" width="25.400" height="20" fill="none" stroke="#2e2e2e" stroke-width="2.200"/>
        <rect x="271.300" y="8" width="25.400" height="4.800" fill="#2e2e2e"/>
        <path d="M272.800 9.900H288" stroke="#f0f0f5" stroke-width="1.300"/>
        <rect x="290" y="9.200" width="1.800" height="1.600" fill="#f0f0f5"/><rect x="293.800" y="9.200" width="1.800" height="1.600" fill="#f0f0f5"/>
        <rect x="275.400" y="16.400" width="17.600" height="8" fill="none" stroke="#666" stroke-width="1.800"/>
        <!-- batch -->
        <g fill="none" stroke="#8c8c8c" stroke-width="2">
          <path d="M307.500 10.400V6.300H328.700V22.300H326.500"/>
          <rect x="304.100" y="12.400" width="20.700" height="16.100"/>
        </g>
        <path d="M308.500 18l3 1c1-2.500 7-2.500 8 0c2-1.500 4 0 2.500 2c-1 1.300-2.500 1.500-3 2.500c-.5 1.500-6 1.500-7 0c-.5-2.500-2-3.500-3.500-5.500z" fill="#9a9a9a"/>
        <rect x="314" y="15.400" width="3.500" height="1.200" fill="#9a9a9a"/>
        <!-- lock -->
        <g fill="none" stroke="#9a9a9a" stroke-width="2">
          <path d="M340.800 7.300H336.300V29.500H340.800M355.400 7.300H359.700V29.500H355.400"/>
          <rect x="342.300" y="16.500" width="11.400" height="9.200"/>
          <path d="M344.300 16V13.500A3.700 3.700 0 0 1 351.700 13.500V16"/>
        </g>
        <path d="M347.100 19h1.800l-.4 2.400h-1z" fill="#9a9a9a"/>
      </svg>
    </div>

  </div>
  <div class="abs" style="left:1168.500px;top:441px;width:1px;height:17px;background:repeating-linear-gradient(#b4b4be 0,#b4b4be 1px,transparent 1px,transparent 3px)"></div>
  <div id="panel" class="abs">
    <div id="phead" class="abs"><span class="txt abs">默认面板</span></div>
    <svg class="abs" style="left:225px;top:9px" width="32" height="13" viewBox="0 0 32 13"><g fill="none" stroke="#66768c" stroke-width="1"><rect x="0.700" y="0.500" width="9.800" height="10.200" rx="1.600"/><rect x="18.600" y="0.500" width="9.800" height="10.200" rx="1.600"/><path d="M21.300 3L25.800 7.800M25.800 3L21.300 7.800"/></g><path d="M3.200 2.200H8V3.200H7.100V6H8V6.900H6V9.200H5.300V6.900H3.200V6H4.200V3.200H3.200z" fill="#666d78"/></svg>
    <div class="abs" style="left:0;top:27px;width:258px;height:2px;background:#fdfdfe"></div><div class="abs" style="left:0;top:29px;width:258px;height:1.200px;background:#a4a6ae"></div>
    <div class="prow" style="top:31px;height:26px"><svg style="position:absolute;left:5px;top:8px" width="14" height="9" viewBox="0 0 14 9"><path d="M1 1.200L7 7.200L13 1.200" fill="none" stroke="#7a7a84" stroke-width="1.300"/></svg><span class="txt">图元信息</span><svg class="x" width="21" height="20.500" viewBox="0 0 21 20.500"><path d="M6.500 6L13.500 13M13.500 6L6.500 13" stroke="#555" stroke-width="1.100" fill="none"/></svg></div>
    <div class="abs" style="left:10px;top:67px;font-size:13px;font-weight:bold;color:#2b2b2b;white-space:nowrap;line-height:16px">没有选择内容</div>
    <div class="abs" style="left:10px;top:89px;width:236px;height:1.500px;background:#dcdfe7"></div>
    <div class="prow" style="top:288px"><svg style="position:absolute;left:8px;top:6px" width="9" height="14" viewBox="0 0 9 14"><path d="M1.200 1L7.200 7L1.200 13" fill="none" stroke="#7a7a84" stroke-width="1.300"/></svg><span class="txt">材质</span><svg class="x" width="21" height="20.500" viewBox="0 0 21 20.500"><path d="M6.500 6L13.500 13M13.500 6L6.500 13" stroke="#555" stroke-width="1.100" fill="none"/></svg></div>
    <div class="prow" style="top:315px"><svg style="position:absolute;left:8px;top:6px" width="9" height="14" viewBox="0 0 9 14"><path d="M1.200 1L7.200 7L1.200 13" fill="none" stroke="#7a7a84" stroke-width="1.300"/></svg><span class="txt">组件</span><svg class="x" width="21" height="20.500" viewBox="0 0 21 20.500"><path d="M6.500 6L13.500 13M13.500 6L6.500 13" stroke="#555" stroke-width="1.100" fill="none"/></svg></div>
    <div class="prow" style="top:342px"><svg style="position:absolute;left:8px;top:6px" width="9" height="14" viewBox="0 0 9 14"><path d="M1.200 1L7.200 7L1.200 13" fill="none" stroke="#7a7a84" stroke-width="1.300"/></svg><span class="txt">样式</span><svg class="x" width="21" height="20.500" viewBox="0 0 21 20.500"><path d="M6.500 6L13.500 13M13.500 6L6.500 13" stroke="#555" stroke-width="1.100" fill="none"/></svg></div>
    <div class="prow" style="top:369px"><svg style="position:absolute;left:8px;top:6px" width="9" height="14" viewBox="0 0 9 14"><path d="M1.200 1L7.200 7L1.200 13" fill="none" stroke="#7a7a84" stroke-width="1.300"/></svg><span class="txt">标记</span><svg class="x" width="21" height="20.500" viewBox="0 0 21 20.500"><path d="M6.500 6L13.500 13M13.500 6L6.500 13" stroke="#555" stroke-width="1.100" fill="none"/></svg></div>
    <div class="prow" style="top:396px"><svg style="position:absolute;left:8px;top:6px" width="9" height="14" viewBox="0 0 9 14"><path d="M1.200 1L7.200 7L1.200 13" fill="none" stroke="#7a7a84" stroke-width="1.300"/></svg><span class="txt">阴影</span><svg class="x" width="21" height="20.500" viewBox="0 0 21 20.500"><path d="M6.500 6L13.500 13M13.500 6L6.500 13" stroke="#555" stroke-width="1.100" fill="none"/></svg></div>
    <div class="prow" style="top:423px"><svg style="position:absolute;left:8px;top:6px" width="9" height="14" viewBox="0 0 9 14"><path d="M1.200 1L7.200 7L1.200 13" fill="none" stroke="#7a7a84" stroke-width="1.300"/></svg><span class="txt">场景</span><svg class="x" width="21" height="20.500" viewBox="0 0 21 20.500"><path d="M6.500 6L13.500 13M13.500 6L6.500 13" stroke="#555" stroke-width="1.100" fill="none"/></svg></div>
    <div class="prow" style="top:450px"><svg style="position:absolute;left:8px;top:6px" width="9" height="14" viewBox="0 0 9 14"><path d="M1.200 1L7.200 7L1.200 13" fill="none" stroke="#7a7a84" stroke-width="1.300"/></svg><span class="txt">工具向导</span><svg class="x" width="21" height="20.500" viewBox="0 0 21 20.500"><path d="M6.500 6L13.500 13M13.500 6L6.500 13" stroke="#555" stroke-width="1.100" fill="none"/></svg></div>
  </div>
  <div id="status" class="abs">
    <span class="txt abs">单击或拖动以选择对象。Shift = 加/减。Ctrl = 加。Shift + Ctrl = 减。</span>
    <svg class="abs" style="left:0;top:0" width="1430" height="32" viewBox="0 0 1430 32">
      <circle cx="15.800" cy="16.200" r="6.600" fill="#f4f4f8" stroke="#a9a9ae" stroke-width="1.100"/>
      <path d="M15.800 11.800a2.700 2.700 0 0 1 2.700 2.700c0 1.900-2.700 5.600-2.700 5.600s-2.700-3.700-2.700-5.600a2.700 2.700 0 0 1 2.700-2.700z" fill="#b2b2b8"/>
      <circle cx="15.800" cy="14.400" r="1.100" fill="#f4f4f8"/>
      <circle cx="43.900" cy="16" r="6.600" fill="#fff" stroke="#111" stroke-width="1.400"/>
      <circle cx="43.900" cy="12.600" r="1.300" fill="#111"/>
      <path d="M42.200 14.600H45.600L45 20.300H42.800z" fill="#111"/>
      <path d="M65 4V28" stroke="#dcdce2" stroke-width="1.500"/>
      <path d="M1188.900 4V28" stroke="#dcdce2" stroke-width="1.300"/>
      <rect x="1206.500" y="3.500" width="199" height="25.500" rx="2.500" fill="#f0f0f5" stroke="#a9a9ae" stroke-width="1"/>
      <g fill="#c2c2ca"><rect x="1425" y="22" width="1.500" height="1.500"/><rect x="1422" y="25" width="1.500" height="1.500"/><rect x="1425" y="25" width="1.500" height="1.500"/><rect x="1419" y="28" width="1.500" height="1.500"/><rect x="1422" y="28" width="1.500" height="1.500"/><rect x="1425" y="28" width="1.500" height="1.500"/></g>
    </svg>
  </div>
</div>
</body>
</html>
